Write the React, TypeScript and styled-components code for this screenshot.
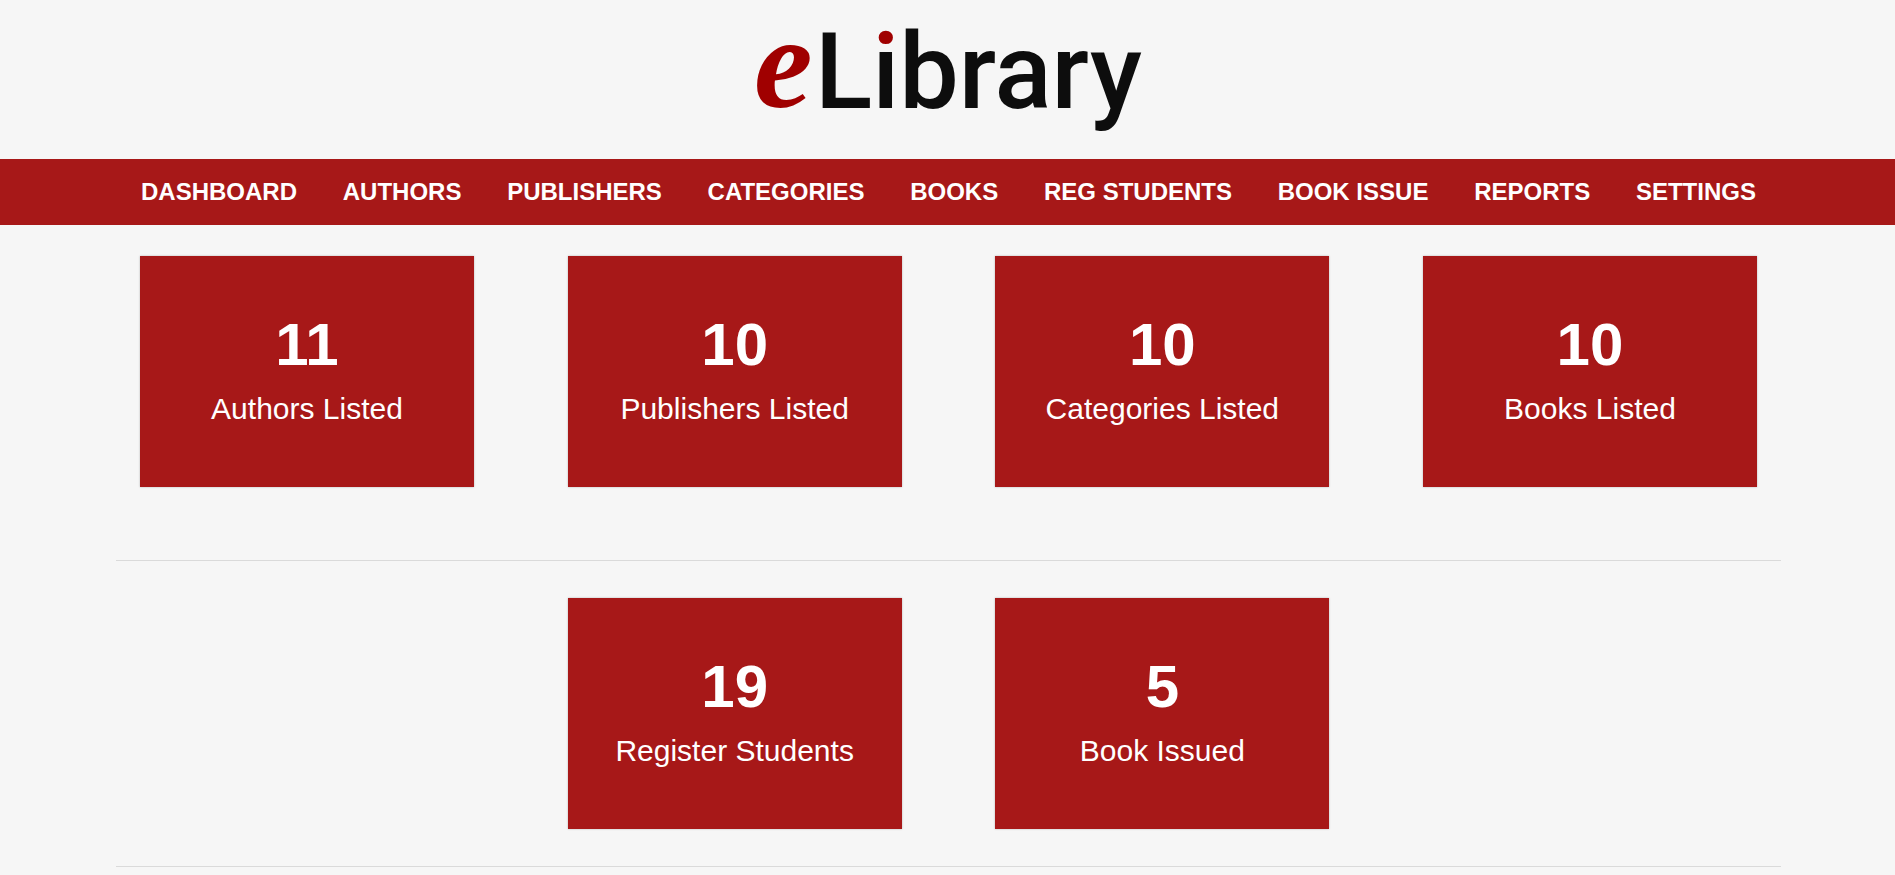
import React from "react";
import styled, { createGlobalStyle } from "styled-components";

const GlobalStyle = createGlobalStyle`
  *, *::before, *::after {
    box-sizing: border-box;
  }
  body {
    margin: 0;
    background: #f6f6f6;
    font-family: "Liberation Sans", Arial, sans-serif;
  }
`;

const Page = styled.div`
  min-height: 100vh;
`;

const Header = styled.header`
  display: flex;
  justify-content: center;
`;

const Logo = styled.svg`
  display: block;
  width: 420px;
  height: 159px;
  overflow: visible;
`;

const LogoInitial = styled.text`
  font: italic 700 132px "Liberation Serif", "Times New Roman", serif;
  fill: #a00000;
`;

const LogoName = styled.text`
  font: 500 106px Roboto, sans-serif;
  fill: #0d0d0d;
`;

const Nav = styled.nav`
  background: #a71818;
`;

const NavList = styled.ul`
  display: flex;
  flex-wrap: wrap;
  justify-content: space-between;
  column-gap: 24px;
  margin: 0;
  padding: 0 139px 0 141px;
  list-style: none;
`;

const NavLink = styled.a`
  display: block;
  padding: 18px 0;
  color: #fff;
  font-size: 24px;
  font-weight: 700;
  line-height: 30px;
  text-decoration: none;
  text-transform: uppercase;
  white-space: nowrap;
`;

const Main = styled.main`
  padding: 0 114px 0 116px;
`;

const StatRow = styled.section<{ $top: number; $bottom: number }>`
  display: grid;
  grid-template-columns: repeat(4, minmax(0, 334px));
  justify-content: space-between;
  padding: ${({ $top, $bottom }) => `${$top}px 24px ${$bottom}px`};
`;

const StatCard = styled.a<{ $column: number }>`
  grid-column: ${({ $column }) => $column};
  padding: 56px 8px 57px;
  background: #a71818;
  box-shadow: 0 0 2px rgba(0, 0, 0, 0.25);
  color: #fff;
  text-align: center;
  text-decoration: none;
`;

const StatValue = styled.div`
  margin-bottom: 10px;
  font-size: 60px;
  font-weight: 700;
  line-height: 66px;
`;

const StatLabel = styled.div`
  font-size: 30px;
  line-height: 42px;
`;

const Divider = styled.hr`
  height: 1px;
  margin: 0;
  border: 0;
  background: #dadada;
`;

const links = [
  "Dashboard",
  "Authors",
  "Publishers",
  "Categories",
  "Books",
  "Reg Students",
  "Book Issue",
  "Reports",
  "Settings",
];

type Stat = { value: number; label: string };

const catalogue: Stat[] = [
  { value: 11, label: "Authors Listed" },
  { value: 10, label: "Publishers Listed" },
  { value: 10, label: "Categories Listed" },
  { value: 10, label: "Books Listed" },
];

const circulation: Stat[] = [
  { value: 19, label: "Register Students" },
  { value: 5, label: "Book Issued" },
];

type StatsProps = { items: Stat[]; firstColumn: number; top: number; bottom: number };

function Stats({ items, firstColumn, top, bottom }: StatsProps) {
  return (
    <StatRow $top={top} $bottom={bottom}>
      {items.map((s, i) => (
        <StatCard href="#" key={s.label} $column={firstColumn + i}>
          <StatValue>{s.value}</StatValue>
          <StatLabel>{s.label}</StatLabel>
        </StatCard>
      ))}
    </StatRow>
  );
}

export default function App() {
  return (
    <Page>
      <GlobalStyle />
      <Header>
        <Logo viewBox="0 0 420 159" role="img" aria-label="eLibrary">
          <defs>
            {/* red dot over a black stem */}
            <linearGradient id="dotted" gradientUnits="userSpaceOnUse" x1="0" y1="0" x2="0" y2="159">
              <stop offset="0.29" stopColor="#a00000" />
              <stop offset="0.29" stopColor="#0d0d0d" />
            </linearGradient>
          </defs>
          <LogoInitial x="16" y="107">e</LogoInitial>
          <LogoName x="77" y="108">
            L<tspan fill="url(#dotted)">i</tspan>brary
          </LogoName>
        </Logo>
      </Header>
      <Nav>
        <NavList>
          {links.map((l) => (
            <li key={l}>
              <NavLink href="#">{l}</NavLink>
            </li>
          ))}
        </NavList>
      </Nav>
      <Main>
        <Stats items={catalogue} firstColumn={1} top={31} bottom={73} />
        <Divider />
        <Stats items={circulation} firstColumn={2} top={37} bottom={37} />
        <Divider />
      </Main>
    </Page>
  );
}
